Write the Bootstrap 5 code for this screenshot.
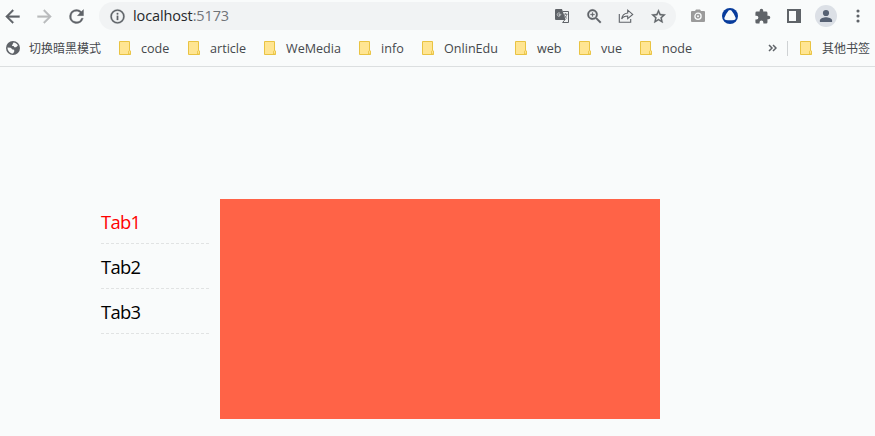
<!DOCTYPE html>
<html lang="zh-CN">
<head>
<meta charset="utf-8">
<meta name="viewport" content="width=device-width, initial-scale=1">
<title>localhost:5173</title>
<link href="https://cdn.jsdelivr.net/npm/bootstrap@5.3.0/dist/css/bootstrap.min.css" rel="stylesheet">
<style>
body{background:#f9fbfb;color:#000;font-family:"Open Sans","Noto Sans CJK SC",sans-serif;height:436px;overflow:hidden}
.toolbar-row{height:32px;color:#5f6368;padding-right:1px}
.tool{width:32px;height:32px;flex:none}
.tool svg{display:block;fill:currentColor}
.nav-tools{margin-left:-3.5px}
.forward{color:#b9bbbd}
.address{width:577px;height:28px;background:#f1f3f4;margin-left:6.5px;padding:0 2px 0 2px}
.url{font-size:14.5px;line-height:28px;color:#26282b;letter-spacing:-.12px}
.url span{color:#707478}
.extras{margin-left:6px}
.bookmarks{height:35px;border-bottom:1px solid #dcdfe0;font-size:12.6px;color:#45484c;line-height:32px;padding:0 0 2px 6px}
.folders{display:grid;grid-template-columns:69px 76px 95px 63px 93px 64px 61px 60px;margin-left:18px}
.bm{display:flex;align-items:center;white-space:nowrap}
.bm span{padding-top:1px}
.bm svg{width:12px;height:14px;margin-right:10px;flex:none}
.bm .cjk{font-family:"Noto Sans CJK SC",sans-serif;font-size:12px;padding-top:0}
.bm.theme svg{width:14px;height:14px;margin-right:9px}
.theme{width:95px}
.other{border-left:1px solid #cfd2d4;height:15px;padding-left:12px;margin-left:10px;width:88px}
.more{width:9px}
.demo{padding:132px 0 0 101px;gap:9px}
.tabs{width:110px}
.tab-item{height:45px;line-height:43px;font-size:18.4px;letter-spacing:-.7px;padding-top:1px;background:repeating-linear-gradient(90deg,#e1e3e3 0 3px,transparent 3px 5px) 0 100%/100% 1px no-repeat}
.tab-item.active{color:red}
.panel{width:440px;height:220px;background:#ff6347}
</style>
<script src="https://cdn.jsdelivr.net/npm/bootstrap@5.3.0/dist/js/bootstrap.bundle.min.js"></script>
</head>
<body>
<svg class="d-none"><symbol id="folder" viewBox="0 0 12 14"><path d="M.5.5h10v9l1 .5v3.5H.5z" fill="#ffe592" stroke="#e9c342"/><path d="M9.500 13V10.200q1-1 2 0V13z" fill="#ffe592" stroke="#e9c342" stroke-width=".8"/></symbol></svg>
<header>
<div class="toolbar-row d-flex align-items-center">
 <div class="nav-tools d-flex">
  <div class="tool d-flex align-items-center justify-content-center"><svg width="21" height="21" viewBox="0 0 24 24"><path d="M20 11H7.830l5.590-5.590L12 4l-8 8 8 8 1.410-1.410L7.830 13H20z" stroke="currentColor" stroke-width=".4"/></svg></div>
  <div class="tool forward d-flex align-items-center justify-content-center"><svg width="21" height="21" viewBox="0 0 24 24"><path d="M12 4l-1.410 1.410L16.170 11H4v2h12.170l-5.580 5.590L12 20l8-8z" stroke="currentColor" stroke-width=".4"/></svg></div>
  <div class="tool d-flex align-items-center justify-content-center"><svg width="21" height="21" viewBox="0 0 24 24"><path d="M17.650 6.350A7.960 7.960 0 0 0 12 4a8 8 0 1 0 7.730 10h-2.080A6 6 0 1 1 12 6c1.660 0 3.140.69 4.220 1.780L13 11h7V4z" stroke="currentColor" stroke-width=".4"/></svg></div>
 </div>
 <div class="address rounded-pill d-flex align-items-center">
  <div class="tool d-flex align-items-center justify-content-center"><svg width="17" height="17" viewBox="0 0 24 24"><path d="M11 7h2v2h-2zm0 4h2v6h-2zm1-9a10 10 0 1 0 0 20 10 10 0 0 0 0-20zm0 18a8 8 0 1 1 0-16 8 8 0 0 1 0 16z" stroke="currentColor" stroke-width=".4"/></svg></div>
  <div class="url flex-grow-1">localhost<span>:5173</span></div>
  <div class="tool d-flex align-items-center justify-content-center"><svg width="14" height="14" viewBox="0 0 14 14"><path d="M1 0h6l3.700 11H1a1 1 0 0 1-1-1V1a1 1 0 0 1 1-1z"/><path d="M6.300 5.300H4v1h1.200c-.2.7-.7 1-1.300 1a1.700 1.700 0 1 1 1.100-3" fill="none" stroke="#d2d4d6" stroke-width=".8"/><path d="M7.800 2.500h5.700v11H7.600l2.100-2.500" fill="none" stroke="currentColor" stroke-width="1"/><path d="M8.500 5.200h4M10.500 4.200v1M11.800 5.200c-.3 1.800-1.100 2.900-2.200 3.800M9.300 6.200c.5 1.500 1.500 2.500 2.800 3.300" fill="none" stroke="currentColor" stroke-width=".8"/></svg></div>
  <div class="tool d-flex align-items-center justify-content-center"><svg width="19" height="19" viewBox="0 0 24 24"><path d="M15.500 14h-.79l-.28-.27A6.500 6.500 0 1 0 13.730 14.430l.27.28v.79l5 4.990L20.490 19zm-6 0a4.500 4.500 0 1 1 0-9 4.500 4.500 0 0 1 0 9zm.5-7H9v2H7v1h2v2h1v-2h2V9h-2z" stroke="currentColor" stroke-width=".4"/></svg></div>
  <div class="tool d-flex align-items-center justify-content-center"><svg width="16" height="16" viewBox="0 0 16 16"><path d="M1.300 6v8.300h11.400V11M9.700 5V2.200l5 4.200-5 4.200V8C6.800 8 4.800 9 3.700 11c.3-3.300 2.400-5.600 6-6z" fill="none" stroke="currentColor" stroke-width="1.100"/></svg></div>
  <div class="tool d-flex align-items-center justify-content-center"><svg width="17" height="17" viewBox="0 0 24 24"><path d="M22 9.240l-7.190-.62L12 2 9.190 8.630 2 9.240l5.460 4.730L5.820 21 12 17.270 18.180 21l-1.630-7.030zM12 15.400l-3.760 2.270 1-4.280-3.320-2.880 4.380-.38L12 6.100l1.710 4.040 4.380.38-3.320 2.880 1 4.280z" stroke="currentColor" stroke-width=".5"/></svg></div>
 </div>
 <div class="extras d-flex">
  <div class="tool d-flex align-items-center justify-content-center"><svg width="14" height="14" viewBox="0 0 14 14"><path d="M4 2 5 .5h4L10 2h3a1 1 0 0 1 1 1v9a1 1 0 0 1-1 1H1a1 1 0 0 1-1-1V3a1 1 0 0 1 1-1z" fill="#9b9b9b"/><circle cx="7" cy="7.300" r="3.100" fill="#9b9b9b" stroke="#f9fbfb" stroke-width="1.300"/><circle cx="7" cy="7.300" r="1" fill="#f9fbfb"/></svg></div>
  <div class="tool d-flex align-items-center justify-content-center"><svg width="16" height="16" viewBox="0 0 16 16"><circle cx="8" cy="8" r="8" fill="#083c9c"/><path d="M6.600 2.600Q8 1.300 9.400 2.600q2.600 3 4.300 7.400.2 1.600-1.500 2-4.200.7-8.400 0-1.700-.4-1.500-2 1.700-4.400 4.300-7.400z" fill="#f9fbfb"/></svg></div>
  <div class="tool d-flex align-items-center justify-content-center"><svg width="17" height="17" viewBox="0 0 24 24"><path d="M20.500 11H19V7a2 2 0 0 0-2-2h-4V3.500a2.500 2.500 0 0 0-5 0V5H4a2 2 0 0 0-2 2v3.800h1.500a2.700 2.700 0 0 1 0 5.400H2V20a2 2 0 0 0 2 2h3.800v-1.500a2.700 2.700 0 0 1 5.400 0V22H17a2 2 0 0 0 2-2v-4h1.500a2.500 2.500 0 0 0 0-5z"/></svg></div>
  <div class="tool d-flex align-items-center justify-content-center"><svg width="14" height="14" viewBox="0 0 14 14"><path fill-rule="evenodd" d="M0 0h14v14H0zM2 2v10h7V2z"/></svg></div>
  <div class="tool d-flex align-items-center justify-content-center"><svg width="22" height="22" viewBox="0 0 22 22"><circle cx="11" cy="11" r="11" fill="#dce0e6"/><circle cx="11" cy="8" r="3.100" fill="#566173"/><path d="M4.900 17v-1.500c0-2 4-3.200 6.100-3.200s6.100 1.200 6.100 3.200V17z" fill="#566173"/></svg></div>
  <div class="tool d-flex align-items-center justify-content-center"><svg width="4" height="14" viewBox="0 0 4 14"><circle cx="2" cy="2" r="1.550"/><circle cx="2" cy="7" r="1.550"/><circle cx="2" cy="12" r="1.550"/></svg></div>
 </div>
</div>
<nav class="bookmarks d-flex align-items-center">
 <div class="bm theme"><svg viewBox="0 0 14 14"><circle cx="7" cy="7" r="7" fill="#5f6368"/><path d="M7.500 1.400c2 .2 3.600 1.300 4.400 3L10 6.300H8.300L7.600 5H5.900l.6-1.600zM1.500 6.500l3.200.3 1.800 1.700 1.700.3v2L7 12.500C4 12.500 1.400 9.800 1.500 6.500z" fill="#f9fbfb"/></svg><span class="cjk">切换暗黑模式</span></div>
 <div class="folders">
  <div class="bm"><svg><use href="#folder"/></svg><span>code</span></div>
  <div class="bm"><svg><use href="#folder"/></svg><span>article</span></div>
  <div class="bm"><svg><use href="#folder"/></svg><span>WeMedia</span></div>
  <div class="bm"><svg><use href="#folder"/></svg><span>info</span></div>
  <div class="bm"><svg><use href="#folder"/></svg><span>OnlinEdu</span></div>
  <div class="bm"><svg><use href="#folder"/></svg><span>web</span></div>
  <div class="bm"><svg><use href="#folder"/></svg><span>vue</span></div>
  <div class="bm"><svg><use href="#folder"/></svg><span>node</span></div>
 </div>
 <svg class="more ms-auto flex-shrink-0" height="8" viewBox="0 0 9 8"><path d="M1 1l3 3-3 3M5 1l3 3-3 3" fill="none" stroke="#5f6368" stroke-width="1.500"/></svg>
 <div class="other bm"><svg><use href="#folder"/></svg><span class="cjk">其他书签</span></div>
</nav>
</header>
<main class="demo d-flex align-items-start">
 <div class="tabs">
  <div class="tab-item active">Tab1</div>
  <div class="tab-item">Tab2</div>
  <div class="tab-item">Tab3</div>
 </div>
 <div class="panel"></div>
</main>
</body>
</html>
